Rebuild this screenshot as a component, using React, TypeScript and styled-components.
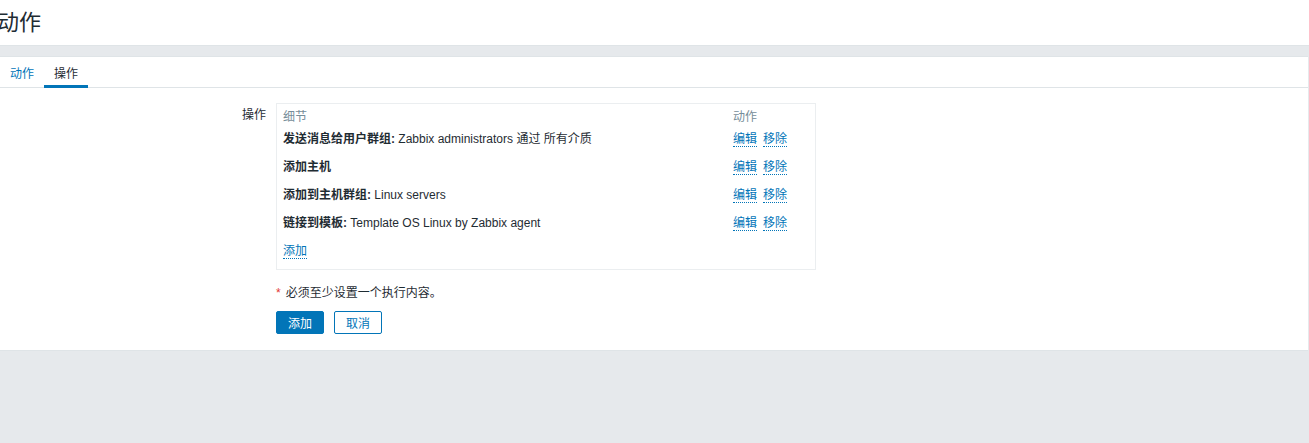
import React from "react";
import styled, { createGlobalStyle } from "styled-components";

const Global = createGlobalStyle`
  html, body { margin: 0; padding: 0; }
  body {
    background: #e6e9ec;
    font-family: "Liberation Sans", "Noto Sans CJK SC", sans-serif;
    font-size: 12px;
    color: #1f2c33;
  }
`;

const Page = styled.div`
  width: 1309px;
  height: 443px;
  display: flex;
  flex-direction: column;
  background: #e6e9ec;
`;

const Header = styled.header`
  height: 45px;
  background: #fff;
  border-bottom: 1px solid #dfe4e7;
  display: flex;
  align-items: center;
`;

const Title = styled.h1`
  margin: 0 0 5px -3px;
  font-size: 22px;
  font-weight: normal;
  color: #1f2c33;
`;

const Band = styled.div`
  height: 10px;
  background: #e6e9ec;
`;

const Container = styled.main`
  background: #fff;
  border-top: 1px solid #dfe4e7;
  border-bottom: 1px solid #dfe4e7;
  margin-right: 1px;
`;

const Tabs = styled.nav`
  display: flex;
  height: 30px;
  border-bottom: 1px solid #dfe4e7;
`;

const Tab = styled.a<{ $active?: boolean }>`
  display: flex;
  align-items: center;
  padding: 2px 10px 0;
  color: ${(p) => (p.$active ? "#1f2c33" : "#0275b8")};
  border-bottom: 3px solid ${(p) => (p.$active ? "#0275b8" : "transparent")};
  margin-bottom: -1px;
  cursor: pointer;
`;

const Form = styled.div`
  display: grid;
  grid-template-columns: 266px 540px;
  column-gap: 10px;
  padding: 15px 0 16px;
`;

const Label = styled.div`
  text-align: right;
  padding-top: 5px;
  line-height: 14px;
`;

const Cell = styled.div``;

const Box = styled.div`
  border: 1px solid #ebeef0;
  padding: 0 5px 4px;
`;

const Table = styled.table`
  width: 100%;
  border-collapse: collapse;
`;

const Th = styled.th<{ $w?: string }>`
  text-align: left;
  font-weight: normal;
  color: #768d99;
  height: 14px;
  padding: 6px 1px 1px;
  line-height: 14px;
  vertical-align: middle;
  width: ${(p) => p.$w || "auto"};
`;

const Td = styled.td`
  height: 28px;
  padding: 0 1px;
  line-height: 14px;
  vertical-align: middle;
`;

const B = styled.b`
  font-weight: bold;
`;

const Link = styled.a`
  color: #0275b8;
  text-decoration: none;
  border-bottom: 1px dotted #0275b8;
  cursor: pointer;
  & + & {
    margin-left: 6px;
  }
`;

const Note = styled.div`
  grid-column: 2;
  margin-top: 16px;
  line-height: 14px;
`;

const Star = styled.span`
  color: #e33734;
  margin-right: 5px;
`;

const Buttons = styled.div`
  grid-column: 2;
  display: flex;
  gap: 10px;
  margin-top: 11px;
`;

const Button = styled.button<{ $primary?: boolean }>`
  height: 23px;
  width: 48px;
  border-radius: 2px;
  font-family: inherit;
  font-size: 12px;
  border: 1px solid #0275b8;
  background: ${(p) => (p.$primary ? "#0275b8" : "#fff")};
  color: ${(p) => (p.$primary ? "#fff" : "#0275b8")};
  padding: 0;
  cursor: pointer;
`;

const rows: { label: string; detail: string }[] = [
  { label: "发送消息给用户群组:", detail: " Zabbix administrators 通过 所有介质" },
  { label: "添加主机", detail: "" },
  { label: "添加到主机群组:", detail: " Linux servers" },
  { label: "链接到模板:", detail: " Template OS Linux by Zabbix agent" },
];

export default function App() {
  return (
    <>
      <Global />
      <Page>
        <Header>
          <Title>动作</Title>
        </Header>
        <Band />
        <Container>
          <Tabs>
            <Tab>动作</Tab>
            <Tab $active>操作</Tab>
          </Tabs>
          <Form>
            <Label>操作</Label>
            <Cell>
              <Box>
                <Table>
                  <thead>
                    <tr>
                      <Th>细节</Th>
                      <Th $w="76px">动作</Th>
                    </tr>
                  </thead>
                  <tbody>
                    {rows.map((r) => (
                      <tr key={r.label}>
                        <Td>
                          <B>{r.label}</B>
                          {r.detail}
                        </Td>
                        <Td>
                          <Link>编辑</Link>
                          <Link>移除</Link>
                        </Td>
                      </tr>
                    ))}
                    <tr>
                      <Td colSpan={2}>
                        <Link>添加</Link>
                      </Td>
                    </tr>
                  </tbody>
                </Table>
              </Box>
            </Cell>
            <Note>
              <Star>*</Star>必须至少设置一个执行内容。
            </Note>
            <Buttons>
              <Button $primary>添加</Button>
              <Button>取消</Button>
            </Buttons>
          </Form>
        </Container>
      </Page>
    </>
  );
}
